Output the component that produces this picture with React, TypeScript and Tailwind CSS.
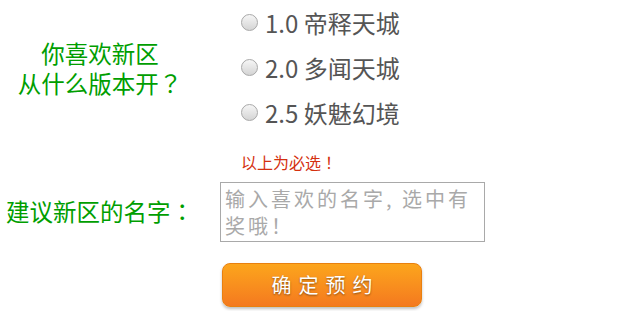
import { useState } from "react";

const versions = [
  { id: "v10", label: "1.0 帝释天城" },
  { id: "v20", label: "2.0 多闻天城" },
  { id: "v25", label: "2.5 妖魅幻境" },
];

// full-width punctuation, centred in its em box like YaHei draws it
function Punct({ children }: { children: string }) {
  return (
    <span className="inline-block w-[1em] text-center font-['Noto_Sans_CJK_TC',sans-serif]">{children}</span>
  );
}

export default function App() {
  const [picked, setPicked] = useState<string | null>(null);
  const [name, setName] = useState("");

  return (
    <div className="w-[641px] h-[311px] bg-white font-['Microsoft_YaHei','Noto_Sans_CJK_SC',sans-serif]">
      {/* version question */}
      <div className="flex">
        <div className="w-[200px] flex items-center justify-center text-center text-[23.5px] leading-[30px] text-[#009e00]">
          <div>
            你喜欢新区
            <br />
            从什么版本开<Punct>？</Punct>
          </div>
        </div>
        <div className="pl-[41px]">
          {versions.map((v) => (
            <label key={v.id} className="flex items-center h-[45px] cursor-pointer">
              <input
                type="radio"
                name="version"
                checked={picked === v.id}
                onChange={() => setPicked(v.id)}
                className="appearance-none w-[17px] h-[17px] rounded-full border border-[#a8a8a8] bg-gradient-to-b from-[#f6f6f6] to-[#d4d4d4] checked:from-[#9ad] checked:to-[#58a]"
              />
              <span className="ml-[7px] text-[24px] text-[#555]">{v.label}</span>
            </label>
          ))}
        </div>
      </div>

      <div className="ml-[241px] mt-[17px] text-[16px] leading-[20px] text-[#d4300f]">
        以上为必选<Punct>！</Punct>
      </div>

      {/* name suggestion */}
      <div className="flex items-center mt-[10px]">
        <div className="w-[200px] text-center text-[23.5px] text-[#009e00]">
          建议新区的名字<Punct>：</Punct>
        </div>
        <textarea
          value={name}
          onChange={(e) => setName(e.target.value)}
          placeholder="输入喜欢的名字, 选中有奖哦！"
          className="ml-[20px] w-[265px] h-[60px] border border-[#a9a9a9] px-[4px] pt-[2px] text-[20px] leading-[27px] tracking-[3px] text-[#555] placeholder:text-[#a9a9a9] resize-none outline-none overflow-hidden"
        />
      </div>

      <button className="ml-[222px] mt-[21px] w-[200px] h-[44px] rounded-[8px] border border-[#e9800f] bg-gradient-to-b from-[#fca51c] to-[#f4791f] shadow-[0_2px_3px_rgba(0,0,0,0.25)] text-white text-[20px] tracking-[7px] pl-[7px] [text-shadow:0_1px_2px_rgba(0,0,0,0.45)]">
        确定预约
      </button>
    </div>
  );
}
